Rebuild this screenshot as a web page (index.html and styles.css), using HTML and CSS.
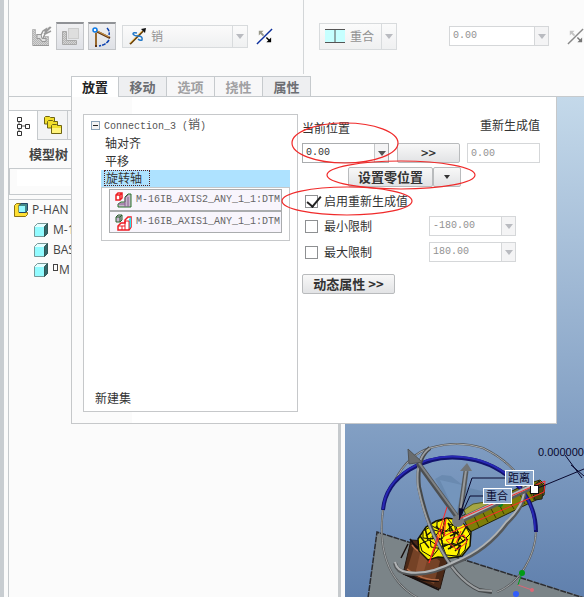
FILE: index.html
```html
<!DOCTYPE html>
<html lang="zh-CN">
<head>
<meta charset="utf-8">
<title>P-HAND</title>
<link rel="stylesheet" href="styles.css">
</head>
<body>
<div class="app">
  <header class="ribbon">
    <div class="toolbar">
      <svg class="tool-icon" viewBox="0 0 20 20" role="img" aria-label="界面">
        <defs><pattern id="dots" width="2" height="2" patternUnits="userSpaceOnUse"><rect width="2" height="2" fill="#d4d4d4"/><path d="M0 0h1v1H0zM1 1h1v1H1z" fill="#b4b4b4"/></pattern></defs>
        <path d="M.500 3.500h3v5h3v2h3v2h2v-2h5v9H.500z" fill="url(#dots)" stroke="#b8b8b8"/>
        <path d="M5 8.500h4l1 4h4v3h-4l-2-3H5z" fill="#e2e2e2" stroke="#999"/>
        <path d="M1 19.500h16" stroke="#999"/>
        <path d="M9 9l2-4 3-2-1 3 5-5M11 12l2-4 6-3M12 8l7-7" fill="none" stroke="#9a9a9a" stroke-width="1.500"/>
      </svg>
      <button class="tool" aria-label="手动放置">
        <svg viewBox="0 0 20 20" width="20" height="20"><path d="M2.500 4.500h4v9h10v4h-14z" fill="url(#dots)" stroke="#a8a8a8"/><rect x="8.500" y="1.500" width="10" height="10" fill="#dedede" stroke="#ccc"/></svg>
      </button>
      <button class="tool" aria-label="约束转换">
        <svg viewBox="0 0 20 20" width="20" height="20"><path d="M4 4l14 7M4 6v14" stroke="#5c3213" stroke-width="2"/><path d="M4 5v13M5 4l12 6" stroke="#d6a04a" stroke-width="1"/><circle cx="3" cy="3" r="2" fill="#fff" stroke="#0878e8" stroke-width="1.5"/><path d="M15 1q3 3 2 7M17 13q-3 5-10 6" fill="none" stroke="#0a3fae" stroke-width="1.5" stroke-dasharray="4 1"/></svg>
      </button>
      <div class="picker picker-joint">
        <svg viewBox="0 0 18 18" width="18" height="18"><path d="M1 17L14 4" stroke="#6b430e" stroke-width="2"/><path d="M1 16L13 4" stroke="#e5b74f" stroke-width="1"/><path d="M17 1l-5 1 4 4z" fill="#111"/><path d="M8 6q-4-1-4 1 1 2 5 2 5 0 4 4-2 1-4-1" fill="none" stroke="#2278c8" stroke-width="1.5"/></svg>
        <select aria-label="连接类型" disabled><option>销</option></select>
      </div>
      <svg class="flip" viewBox="0 0 18 18" role="img" aria-label="反向"><path d="M1 17L17 1" stroke="#0c2f9c" stroke-width="1.5"/><path d="M3 3h5L3 8z" fill="#98988a"/><path d="M5 5l3 3" stroke="#98988a" stroke-width="2"/><path d="M16 10v5h-5z" fill="#000"/><path d="M11 10l4 4" stroke="#000" stroke-width="1.5"/></svg>
      <span class="rule"></span>
      <div class="picker picker-constraint">
        <svg viewBox="0 0 20 14" width="20" height="14"><path d="M0 0h20v14H0z" fill="#c6ffff"/><path d="M0 .5h20M0 13.500h20M10 0v14" stroke="#555"/></svg>
        <select aria-label="约束类型" disabled><option>重合</option></select>
      </div>
      <div class="combo combo-offset off"><input aria-label="偏移" value="0.00" disabled><button aria-label="偏移列表" disabled></button></div>
      <svg class="flip" viewBox="0 0 18 18" role="img" aria-label="反向约束"><path d="M1 17L17 1" stroke="#888" stroke-width="1.5"/><path d="M3 3h5L3 8z" fill="#c4c4c4"/><path d="M5 5l3 3" stroke="#c4c4c4" stroke-width="2"/><path d="M16 10v5h-5z" fill="#777"/><path d="M11 10l4 4" stroke="#777" stroke-width="1.5"/></svg>
    </div>
    <nav class="tabs">
      <button class="tab current">放置</button><button class="tab">移动</button><button class="tab" disabled>选项</button><button class="tab" disabled>挠性</button><button class="tab">属性</button>
    </nav>
  </header>

  <main class="workspace">
    <aside class="sidebar">
      <div class="side-tabs">
        <button class="side-tab current" aria-label="模型树"><svg viewBox="0 0 14 20" width="14" height="20"><path d="M3 4v12M3 10h7" stroke="#555"/><g fill="#fff" stroke="#333"><path d="M1.500 1.500h4v4h-4zM1.500 8.500h4v4h-4zM9.500 8.500h4v4h-4zM1.500 15.500h4v4h-4z"/></g></svg></button>
        <button class="side-tab" aria-label="文件夹浏览器"><svg viewBox="0 0 20 20" width="20" height="20"><g fill="#f2df2c" stroke="#6e6412"><path d="M1.500 9V2.500l1-1h4l1 1h4V9z"/><path d="M4.500 13V6.500l1-1h4l1 1h4V13z"/><path d="M8.500 18.500v-8l1-1h4l1 1h4v8z"/></g><path d="M9 13h9v5H9z" fill="#fff47c"/></svg></button>
        <button class="side-tab" aria-label="收藏夹"></button>
      </div>
      <h2>模型树</h2>
      <div class="filter"><input aria-label="筛选"></div>
      <ul class="tree">
        <li><svg viewBox="0 0 14 14" width="14" height="14"><path d="M.500 2.500l2-2h5v9h6v2l-2 2H.500z" fill="#ffdf32" stroke="#8a7215"/><path d="M5 2.500l2-2h6.500v7l-2 2H5z" fill="#438888" stroke="#246"/><path d="M5 3h6v6H5z" fill="#94f8ff"/></svg><span>P-HAN</span></li>
        <li class="part"><svg viewBox="0 0 14 14" width="14" height="14"><path d="M.500 3.500l3-3h10v10l-3 3H.500z" fill="#e2ffff" stroke="#799"/><path d="M1 4h9v9H1z" fill="#92fbff"/><path d="M10.500 3.500l3-3v10l-3 3z" fill="#326a6a" stroke="#355"/></svg><span>M-1</span></li>
        <li class="part"><svg viewBox="0 0 14 14" width="14" height="14"><path d="M.500 3.500l3-3h10v10l-3 3H.500z" fill="#e2ffff" stroke="#799"/><path d="M1 4h9v9H1z" fill="#92fbff"/><path d="M10.500 3.500l3-3v10l-3 3z" fill="#326a6a" stroke="#355"/></svg><span>BAS</span></li>
        <li class="part packed"><svg viewBox="0 0 14 14" width="14" height="14"><path d="M.500 3.500l3-3h10v10l-3 3H.500z" fill="#e2ffff" stroke="#799"/><path d="M1 4h9v9H1z" fill="#92fbff"/><path d="M10.500 3.500l3-3v10l-3 3z" fill="#326a6a" stroke="#355"/></svg><i></i><span>M</span></li>
      </ul>
    </aside>

    <section class="viewport">
      <svg class="scene" viewBox="345 97 239 500" role="img" aria-label="机器人装配">
        <path d="M377 532l207 65v1H368z" fill="#7b8488"/>
        <path d="M368 598l9-66 207 66" fill="none" stroke="#2b2c31" stroke-width="1.500" stroke-dasharray="6 1"/>
        <path d="M435 479l7-4 9 1 14 11 21 5-3 19-25 9z" fill="#6687ad" opacity=".8"/>
        <path d="M440 480l16 35 6-30z" fill="#7c9dc4" opacity=".6"/>
        <path d="M383 510C379 540 382 585 427 602M536 532C535 556 520 583 497 592" fill="none" stroke="#55585a" stroke-width="2"/>
        <path d="M383 510C379 540 382 585 427 602M536 532C535 556 520 583 497 592" fill="none" stroke="#a2a5a7"/>
        <path d="M395 480Q409 454 430 448Q457 440 483 448Q508 460 522 480" fill="none" stroke="#55585a" stroke-width="2"/>
        <path d="M395 480Q409 454 430 448Q457 440 483 448Q508 460 522 480" fill="none" stroke="#a8aaac"/>
        <path d="M411 540l16 1 21 17-8 31-37-15z" fill="#4b2917" stroke="#251710"/>
        <path d="M415 544l25 17-6 23-27-14z" fill="#754226"/>
        <path d="M421 549l8 5-7 24-7-3z" fill="#8a5133"/>
        <path d="M412 541q3 12 27 16M404 570q13 13 35 11M402 573l37 17M408 544l-7 14M410 539q6 10 17 12" fill="none" stroke="#180f0d" stroke-width="1.500"/>
        <path d="M412 545q5 7 13 9M407 569q13 11 32 11" fill="none" stroke="#ba6e48" stroke-width="1.500"/>
        <path d="M462 516l62-31 16-5 5 5-1 10-8 5-66 32z" fill="#7e7e08" stroke="#242507"/>
        <path d="M474 516l5 11M482 511l6 11M490 507l6 11M498 502l6 12M508 499l6 10M519 493l6 11M528 488l6 12" stroke="#3d3d00"/>
        <path d="M464 510l9-6 31-5-21 10-16 9z" fill="#a5a743" stroke="#55591d"/>
        <path d="M531 488l8-7 5 5-2 13-7 1z" fill="#48480a" stroke="#222"/>
        <circle cx="500" cy="504" r="3" fill="#008820"/>
        <path d="M418 539l8-12 10-6 11-3 13 2 11 12-1 14-8 10-12 2-12-1-10 3-9-9z" fill="#f2ee00" stroke="#151406" stroke-width="1.500"/>
        <g fill="#fff500" stroke="#11110a">
          <path d="M423 531l9-5 8 4-7 9-10-1zM437 522l10-4 6 7-7 6-9-3zM420 544l9-4 11 7-8 10-10-6zM441 533l10-3 9 5-3 10-15-1zM454 522l10 2 6 10-7 7-7-8zM443 547l9-4 9 3-4 10-11-1zM459 544l8-5-2 11-6 7zM430 538l12 2 1 9-12-2zM434 530l11 3-3 6-10-2zM449 524l7 2 2 7-8-1z"/>
        </g>
        <path d="M425 528l3 12M436 545l-4 11M445 519l-3 15M420 536l9 12M436 526l9 10M448 523l7 12M455 534l-5 15M466 527l-8 14M448 549l16-8M438 548l8-3M450 536l9-4M461 535l7 5M426 536l6-5M455 551l6-6" fill="none" stroke="#1d1c08" stroke-width="1.500"/>
        <path d="M383 510C386 476 424 454 462 458C502 462 536 492 536 532" fill="none" stroke="#12126e" stroke-width="4"/>
        <path d="M383 509C386 475 424 453 462 457C502 461 535 491 535 530" fill="none" stroke="#2828b4" stroke-width="2"/>
        <path d="M430 448Q416 458 419 487Q426 520 438 543Q456 580 479 590L492 592" fill="none" stroke="#45484a" stroke-width="4"/>
        <path d="M430 448Q415 458 418 487Q425 520 437 542Q455 579 479 590L492 591" fill="none" stroke="#9a9d9f" stroke-width="2"/>
        <path d="M522 480Q531 500 507 523Q487 550 457 562Q427 577 407 573Q397 572 395 563" fill="none" stroke="#55585a" stroke-width="4"/>
        <path d="M522 480Q530 500 506 522Q486 549 456 561Q427 576 407 572Q397 571 395 562" fill="none" stroke="#b0b3b5" stroke-width="2"/>
        <path d="M418 463l42 58" stroke="#4d4f51" stroke-width="5"/><path d="M419 463l40 55" stroke="#7f8284" stroke-width="2"/>
        <path d="M408 449l14 13-13 2z" fill="#696c6e" stroke="#505355"/>
        <path d="M460 515l6-44" stroke="#56595b" stroke-width="5"/><path d="M460 513l6-43" stroke="#979a9c" stroke-width="2"/>
        <path d="M467 463l5 8h-12z" fill="#717476"/>
        <path d="M459 521l72-34" stroke="#595c5e" stroke-width="6"/><path d="M459 520l72-34" stroke="#b6b8ba" stroke-width="3"/>
        <circle cx="458" cy="521" r="6" fill="#777a7c"/>
        <path d="M447 507l-18 56 17-44-2 17 19-9 81-35 1-11-86 38M456 543l5-12M446 540l18-5 3 7-10 8z" fill="none" stroke="#ff2929"/>
        <path d="M506 478h-34l-12 36M484 496h-14l-11 24" fill="none" stroke="#08082e"/>
        <path d="M459 508l5 1-5 11z" fill="#08082e"/>
        <rect x="530.500" y="485.500" width="8" height="8" fill="#fff" stroke="#111"/>
        <path d="M538 488l46-19M565 455l17 23M571 465l13 11" fill="none" stroke="#08082e"/>
        <rect x="505.500" y="470.500" width="28" height="15" fill="#89a5c9" stroke="#fff"/>
        <rect x="483.500" y="488.500" width="28" height="15" fill="#89a5c9" stroke="#fff"/>
        <g class="scene-text"><text class="cjk" x="508" y="482">距离</text><text class="cjk" x="486" y="500">重合</text><text x="538" y="456">0.000000</text></g>
        <path d="M518 585l4-12" stroke="#009b16"/><path d="M518 585l14 5" stroke="#dc6675"/>
        <circle cx="522" cy="573" r="3" fill="#009b16"/><circle cx="532" cy="590" r="2" fill="#dc6675"/><circle cx="516" cy="594" r="3" fill="#315dfc"/>
      </svg>
    </section>
  </main>

  <section class="panel">
    <div class="sets">
      <div class="set-name"><button class="fold" aria-label="折叠"></button><span>Connection_3 (<b>销</b>)</span></div>
      <ul class="constraints">
        <li>轴对齐</li><li>平移</li><li class="chosen"><span>旋转轴</span></li>
      </ul>
      <div class="refs">
        <button class="ref"><svg viewBox="0 0 18 18" width="18" height="18"><path d="M2 4l2-2h4v5L6 9H2zM2 4h4v5M6 4l2-2" fill="#fff" stroke="#ed1c24" stroke-width="1.500"/><path d="M4 16v-3l3-2h4V6l3-3h3v13z" fill="#c5b7ca" stroke="#28742b"/><path d="M11 16V7l3-3M14 16V6M4 13h7" fill="none" stroke="#8a5a92"/></svg><span>M-16IB_AXIS2_ANY_1_1:DTM</span></button>
        <button class="ref"><svg viewBox="0 0 18 18" width="18" height="18"><path d="M2 4l2-2h4v5L6 9H2zM2 4h4v5M6 4l2-2" fill="#c9b5d3" stroke="#28602b"/><path d="M4 17v-4l3-3h4V7l3-3h3v10l-2 3z" fill="#fff" stroke="#ed1c24" stroke-width="1.500"/><path d="M15 6l2-2v10l-2 2z" fill="#24e5f2"/><path d="M11 17V8h4v9M4 13h7M8 13v4M11 7l3-3" fill="none" stroke="#ed1c24"/></svg><span>M-16IB_AXIS1_ANY_1_1:DTM</span></button>
      </div>
      <button class="new-set">新建集</button>
    </div>
    <form class="values">
      <div class="heads"><label for="pos">当前位置</label><label for="regen">重新生成值</label></div>
      <div class="line line-pos">
        <div class="combo"><input id="pos" value="0.00"><button type="button" aria-label="位置列表"></button></div>
        <button type="button" class="push copy">&gt;&gt;</button>
        <input class="regen" id="regen" value="0.00" disabled>
      </div>
      <div class="line line-zero"><button type="button" class="push zero">设置零位置</button><button type="button" class="push more" aria-label="更多"></button></div>
      <div class="line line-check"><label><input type="checkbox" checked>启用重新生成值</label></div>
      <div class="line line-limit"><label><input type="checkbox">最小限制</label><div class="combo off"><input aria-label="最小值" value="-180.00" disabled><button type="button" aria-label="最小值列表" disabled></button></div></div>
      <div class="line line-limit"><label><input type="checkbox">最大限制</label><div class="combo off"><input aria-label="最大值" value="180.00" disabled><button type="button" aria-label="最大值列表" disabled></button></div></div>
      <button type="button" class="push dynamics">动态属性 &gt;&gt;</button>
    </form>
    <svg class="marks" viewBox="0 0 486 328" width="486" height="328" aria-hidden="true"><g fill="none" stroke="#f02a2a" stroke-width="1.200"><ellipse cx="273" cy="46" rx="53" ry="20"/><ellipse cx="329" cy="78" rx="74" ry="14"/><ellipse cx="275" cy="104" rx="65" ry="14"/></g></svg>
  </section>
</div>
</body>
</html>
```
FILE: styles.css
```css
* { box-sizing: border-box; }

body {
  margin: 0;
  background: #fbfbfb;
  color: #333;
  font: 12px/18px "Liberation Sans", "Noto Sans CJK SC", sans-serif;
}

button, input, select { margin: 0; font: inherit; color: inherit; border-radius: 0; }
button { padding: 0; }
ul { margin: 0; padding: 0; list-style: none; }
svg { display: block; flex: none; }

.app {
  position: relative;
  display: flex;
  flex-direction: column;
  min-height: 100vh;
  padding-left: 4px;
  border-left: 4px solid #c8cdd1;
  overflow: hidden;
}

/* ribbon */
.ribbon {
  display: flex;
  flex-direction: column;
  border: solid #c6cacd;
  border-width: 0 0 1px 1px;
}

.toolbar {
  display: flex;
  align-items: center;
  height: 76px;
  padding: 0 0 4px 23px;
  overflow: hidden;
}
.tool-icon { width: 20px; height: 20px; }
.tool {
  display: grid;
  place-items: center;
  flex: none;
  width: 28px;
  height: 28px;
  margin-left: 4px;
  border: 1px solid #c3c5c8;
  border-top: 2px solid #909296;
  background: linear-gradient(#f0f0f2, #dfe1e6);
}

.picker {
  position: relative;
  display: flex;
  align-items: center;
  flex: none;
  border: 1px solid #d8dbdd;
  background: linear-gradient(#fbfbfb, #eff0f1);
  padding-left: 6px;
}
.picker::after, .combo button::after, .more::after {
  content: "";
  border: 4px solid transparent;
  border-top: 5px solid #b9bbc0;
  border-bottom: 0;
}
.picker::after { margin: 0 3px; }
.picker select {
  appearance: none;
  flex: 1;
  align-self: stretch;
  min-width: 0;
  border: 0;
  border-right: 1px solid #d8dbdd;
  padding: 0 0 0 4px;
  background: none;
  color: #929292;
  font-family: "Noto Sans CJK SC", sans-serif;
  opacity: 1;
}
.picker-joint { width: 126px; height: 23px; margin: 0 8px 0 6px; }
.picker-constraint { width: 78px; height: 27px; margin-right: 52px; padding-left: 5px; }
.picker-constraint select { padding-left: 5px; }
.flip { width: 17px; height: 17px; }
.rule { align-self: flex-start; flex: none; width: 1px; height: 74px; margin: 0 15px 0 30px; background: #d3d6d8; }

.combo { display: flex; width: 87px; height: 20px; border: 1px solid #aaacae; background: #fff; flex: none; }
.combo input {
  flex: 1;
  min-width: 0;
  border: 0;
  padding: 0 3px;
  background: none;
  font: 10px/18px "Liberation Mono", monospace;
}
.combo button {
  display: grid;
  place-items: center;
  width: 14px;
  border: 0;
  border-left: 1px solid #c5c7c9;
  background: #f4f4f5;
}
.combo button::after { border-top-color: #555; }
.combo.off { border-color: #d5d7d9; color: #929292; }
.combo.off button { border-color: #d5d7d9; }
.combo.off button::after { border-top-color: #b9bbc0; }
.combo-offset { width: 100px; margin-right: 18px; }

.tabs { display: flex; margin-left: 62px; }
.tab {
  width: 48px;
  height: 20px;
  border: 1px solid #c6cacd;
  border-bottom: 0;
  border-left-width: 0;
  background: #eeeff1;
  color: #6c6e73;
  font: bold 13px/18px "Noto Sans CJK SC", sans-serif;
}
.tab:first-child { border-left-width: 1px; }
.tab.current { height: 21px; margin-bottom: -1px; background: #fff; color: #222; }
.tab:disabled { color: #a0a0a2; background: #f7f7f8; }

/* workspace */
.workspace { display: flex; flex: 1; }

.sidebar {
  flex: none;
  width: 333px;
  padding-top: 13px;
  border: solid #c6cacd;
  border-width: 0 3px 0 1px;
  margin-right: 4px;
}
.side-tabs { display: flex; border-top: 1px solid #c6cacd; }
.side-tab {
  display: grid;
  place-items: center;
  width: 30px;
  height: 29px;
  border: solid #c6cacd;
  border-width: 0 1px 1px 0;
  background: #f3f4f5;
}
.side-tab.current { width: 29px; border-bottom: 0; background: #fff; }
.sidebar h2 { margin: 0; padding: 5px 0 5px 20px; font: bold 13px/18px "Noto Sans CJK SC", sans-serif; color: #444; }
.filter { border: 1px solid #c6cacd; padding: 1px 0 8px 7px; }
.filter input { display: block; width: 100%; height: 16px; border: 0; background: #fff; }
.tree { margin-top: 4px; border-top: 1px solid #c6cacd; font: 12px/20px "Open Sans", "Noto Sans", sans-serif; color: #444; }
.tree li { display: flex; align-items: center; gap: 4px; height: 20px; padding-left: 5px; }
.tree .part { padding-left: 25px; gap: 5px; }
.tree i { width: 5px; height: 7px; margin: 0 -4px 6px 0; border: 1px solid #444; }

.viewport { flex: 1; background: linear-gradient(#c4d9ea, #9fb8d4 38%, #83a0c4 65%, #6080ad); overflow: hidden; }
.scene { width: 100%; }
.scene-text { font: 11px "Liberation Sans", sans-serif; fill: #08082e; }
.scene-text .cjk { font-family: "Noto Sans CJK SC", sans-serif; }

/* placement panel, hangs from the first tab over the workspace */
.panel {
  position: absolute;
  top: 97px;
  left: 63px;
  display: flex;
  gap: 4px;
  width: 486px;
  padding: 17px 16px 11px 11px;
  border: solid #c6c8ca;
  border-width: 0 1px 1px 1px;
  background: linear-gradient(90deg, #fbfbfb 60px, #fff 60px);
}
.panel { left: 67px; }
.sets {
  display: flex;
  flex-direction: column;
  width: 215px;
  height: 298px;
  padding: 1px 7px 4px;
  border: 1px solid #c6c8ca;
  background: #fff;
  font-family: "Noto Sans CJK SC", sans-serif;
}
.set-name { display: flex; align-items: center; gap: 4px; height: 18px; font: 10px/18px "Liberation Mono", monospace; color: #555; }
.set-name span { height: 18px; }
.set-name b { font: 12px/16px "Noto Sans CJK SC", sans-serif; }
.fold {
  width: 9px;
  height: 9px;
  border: 1px solid #8ba3b8;
  background: linear-gradient(#222, #222) center / 5px 1px no-repeat #f3f3f3;
}
.constraints { padding-left: 10px; }
.constraints li { padding-left: 4px; height: 18px; }
.constraints .chosen { height: 17px; padding-left: 3px; background: #aee2ff; line-height: 16px; }
.chosen span { display: block; width: 46px; height: 16px; padding-left: 1px; border: 1px dotted #522; line-height: 14px; }
.refs { margin-left: 10px; padding: 1px 7px 7px; border: 1px solid #c6c8ca; }
.ref {
  display: flex;
  align-items: center;
  gap: 4px;
  width: 100%;
  height: 22px;
  padding: 0 0 0 4px;
  border: 1px solid #aaacae;
  background: #f8f5fc;
  color: #666;
  font: 10px/18px "Liberation Mono", monospace;
}
.new-set { align-self: flex-start; margin: auto 0 0 4px; border: 0; background: none; line-height: 18px; }

.values { flex: 1; font-family: "Noto Sans CJK SC", sans-serif; }
.heads { display: flex; justify-content: space-between; padding-top: 5px; }
.heads label + label { margin-top: -3px; }
.line { display: flex; align-items: center; }
.line-pos { margin-top: 6px; }
.regen {
  width: 73px;
  height: 20px;
  margin-left: 7px;
  padding: 0 3px;
  border: 1px solid #d5d7d9;
  background: #fff;
  color: #929292;
  font: 10px/18px "Liberation Mono", monospace;
}
.push {
  height: 20px;
  border: 1px solid #b9bbbd;
  border-radius: 2px;
  background: linear-gradient(#f8f8f8, #e2e3e5);
  color: #333;
  font: bold 13px/18px "Noto Sans CJK SC", sans-serif;
}
.copy { width: 63px; margin-left: 8px; font-weight: 500; }
.line-zero { margin: 4px 0 0 46px; }
.zero { width: 85px; }
.more { display: grid; place-items: center; width: 28px; }
.more::after { border-top-color: #333; border-width: 4px 3px 0; }
.line-check { margin-top: 5px; }
.line label { display: flex; align-items: center; gap: 6px; }
.line input[type="checkbox"] {
  appearance: none;
  width: 13px;
  height: 13px;
  margin-left: 3px;
  border: 1px solid #8e9092;
  background: #fff;
}
.line input[type="checkbox"]:checked { position: relative; }
.line input[type="checkbox"]:checked::after {
  content: "";
  position: absolute;
  left: 4px;
  top: -3px;
  width: 6px;
  height: 12px;
  border: solid #222;
  border-width: 0 2px 2px 0;
  transform: rotate(40deg);
}
.line-limit { justify-content: space-between; padding-right: 24px; margin-top: 6px; }
.dynamics { display: block; width: 93px; margin-top: 12px; }
.marks { position: absolute; top: 0; left: 0; pointer-events: none; }
```
